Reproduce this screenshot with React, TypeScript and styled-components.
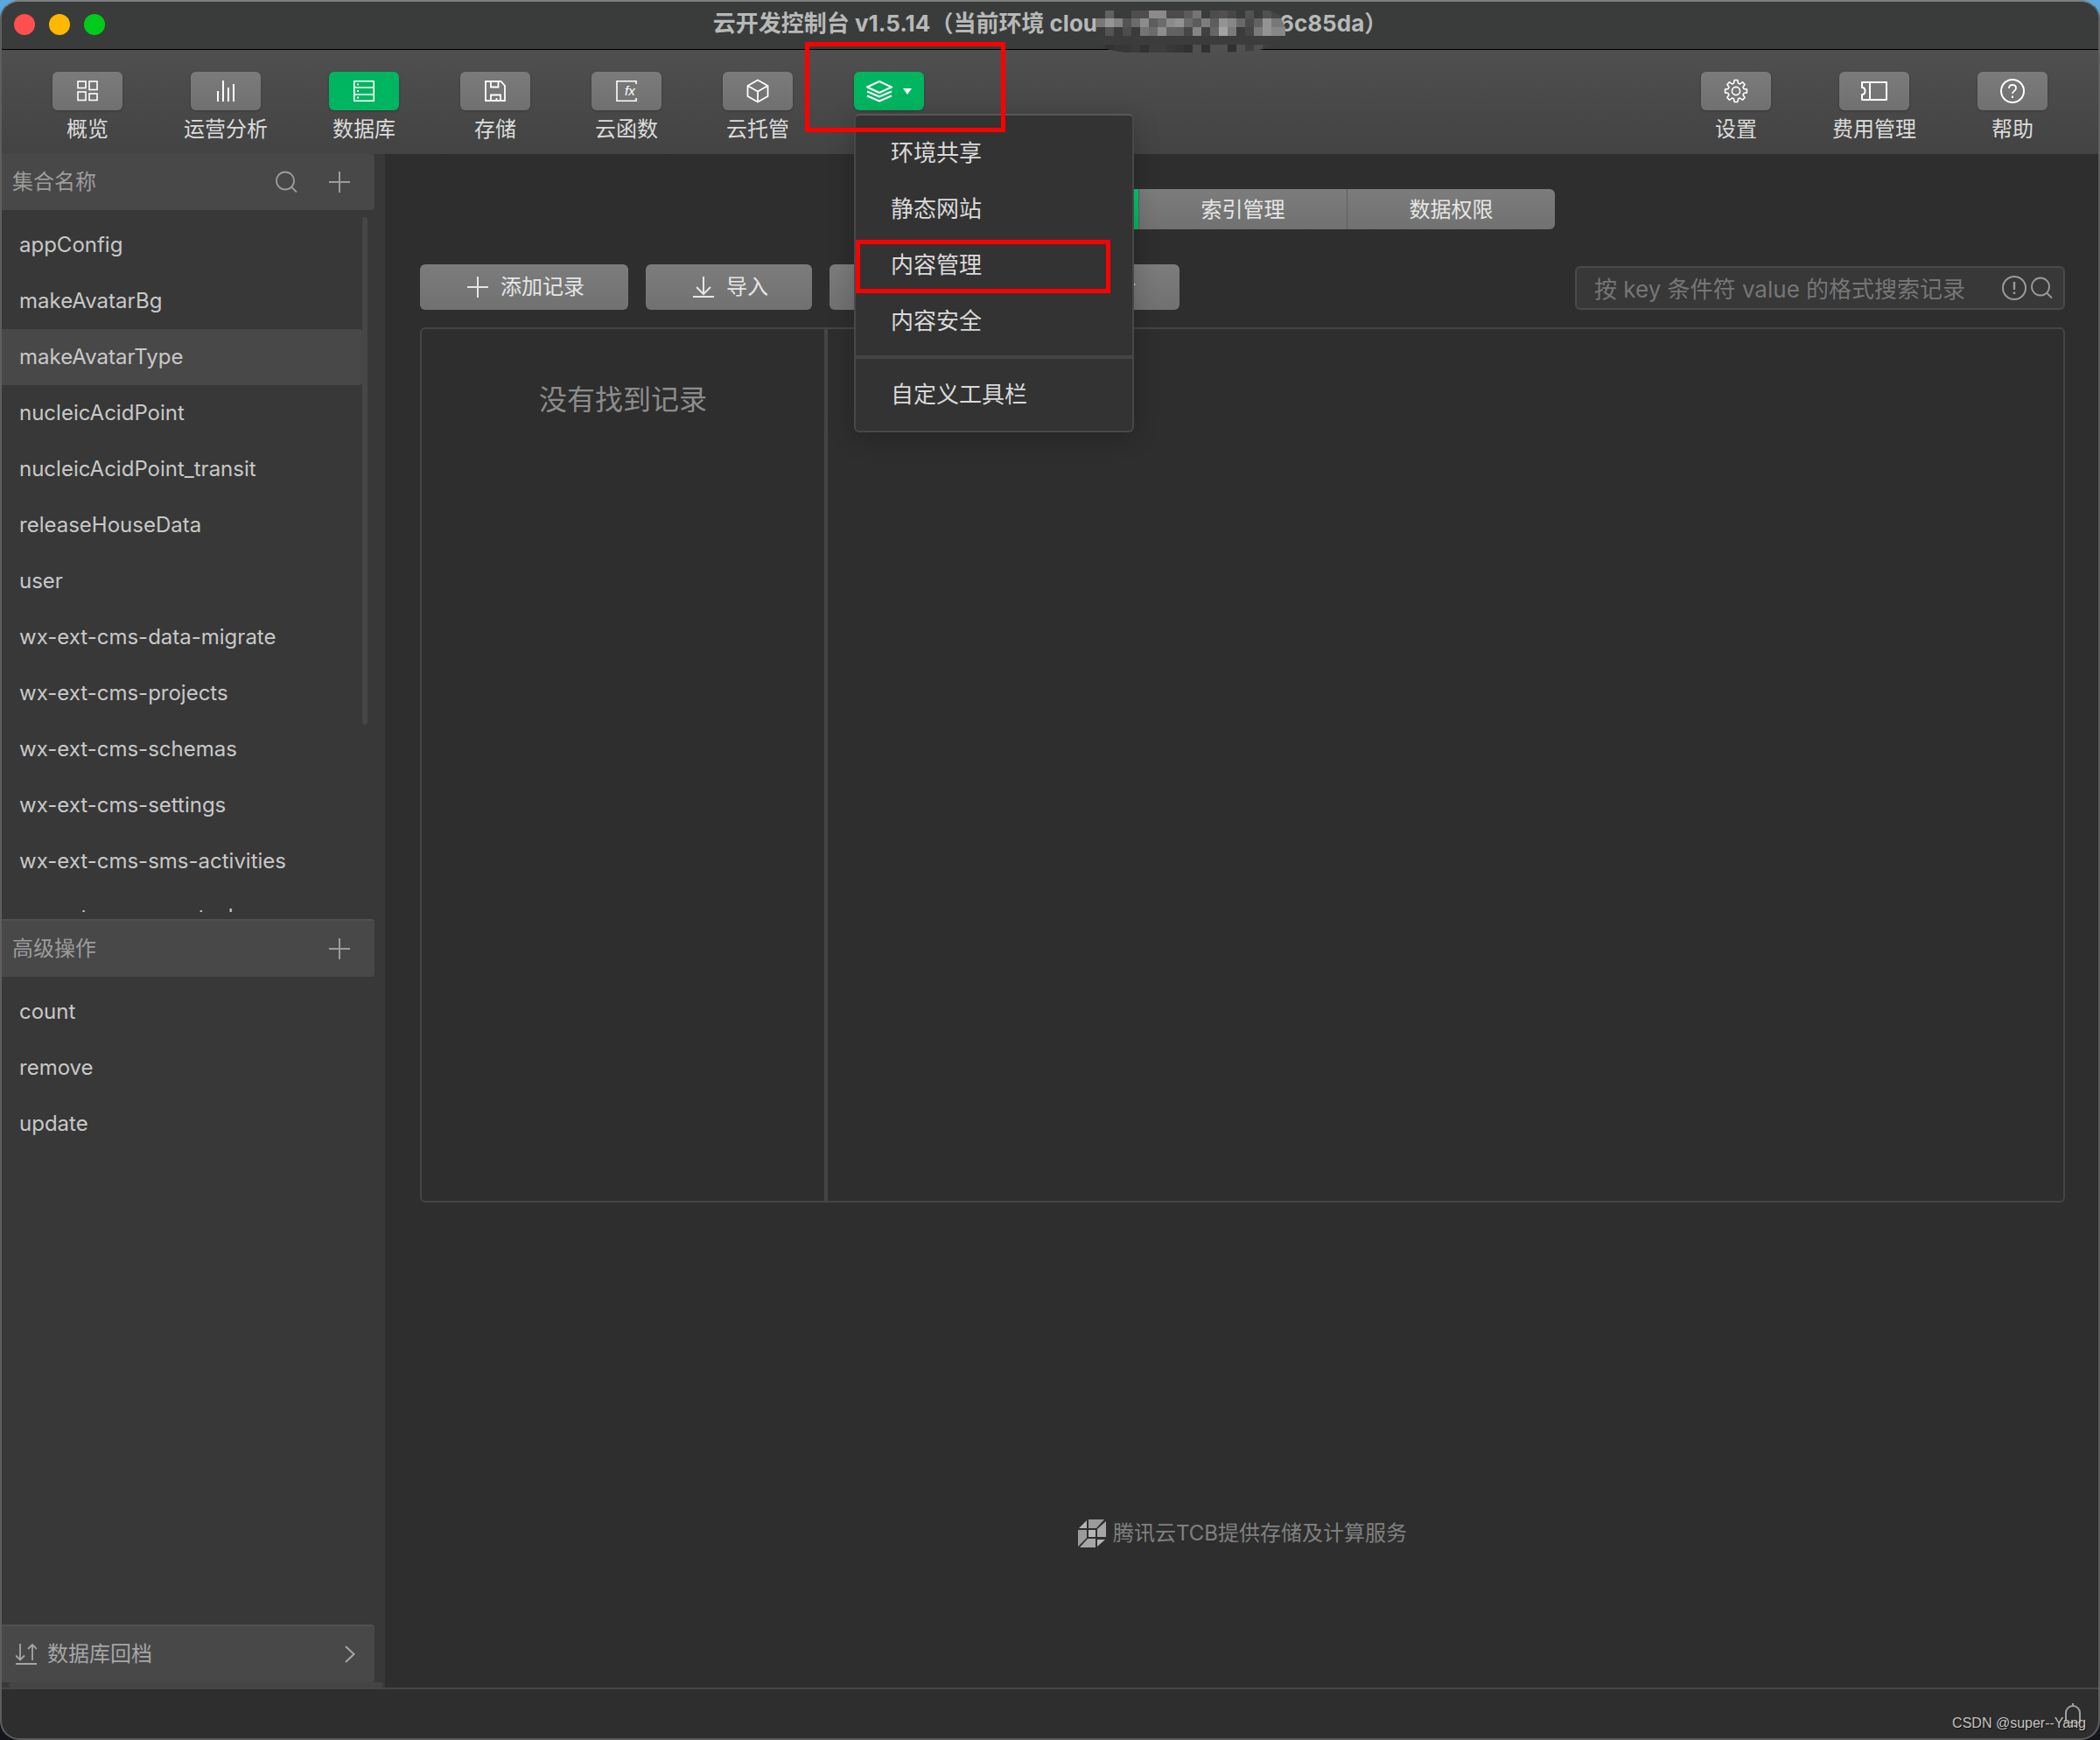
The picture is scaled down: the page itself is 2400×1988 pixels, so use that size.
import React from "react";
import styled, { createGlobalStyle, css } from "styled-components";

const GlobalStyle = createGlobalStyle`
  *, *::before, *::after { box-sizing: border-box; }
  html { background: linear-gradient(to bottom, #5aa9e0 0, #14161c 40%); }
  body {
    margin: 0;
    font-family: Inter, "Noto Sans CJK SC", sans-serif;
    font-size: 24px;
    line-height: 32px;
    color: #c8c8c8;
  }
  button, input { font: inherit; color: inherit; }
  button { border: 0; padding: 0; margin: 0; background: none; cursor: pointer; }
  ul { list-style: none; margin: 0; padding: 0; }
  svg { display: block; flex: none; }
`;

const Window = styled.div`
  display: flex;
  flex-direction: column;
  min-height: 100vh;
  border: 2px solid #5e5e5e;
  border-top-color: #7b7f7d;
  border-radius: 22px;
  background: #2e2e2e;
  overflow: hidden;
`;

/* ---------- title bar ---------- */

const TitleBar = styled.header`
  position: relative;
  display: flex;
  align-items: center;
  justify-content: center;
  height: 55px;
  padding-bottom: 4px;
  background: #3a3c3b;
  border-bottom: 1px solid #000;
`;

const Lights = styled.div`
  position: absolute;
  left: 14px;
  top: 14px;
  display: flex;
  gap: 16px;
`;

const Light = styled.button<{ $color: string }>`
  width: 24px;
  height: 24px;
  border-radius: 50%;
  background: ${(p) => p.$color};
`;

const Title = styled.h1`
  display: flex;
  align-items: center;
  margin: 0;
  font-size: 26px;
  font-weight: 700;
  line-height: 32px;
  color: #b7b9b8;
  white-space: pre;
`;

const Redacted = styled.span`
  position: relative;
  width: 208px;
  height: 32px;
`;

const MosaicArt = styled.svg`
  position: absolute;
  left: -4px;
  top: 1px;
  z-index: 1;
`;

/* ---------- toolbar ---------- */

const Toolbar = styled.nav`
  display: flex;
  justify-content: space-between;
  height: 119px;
  padding: 25px 58px 0;
  background: linear-gradient(to bottom, #4f4f4f, #434343);
`;

const ToolGroup = styled.div`
  display: flex;
  align-items: flex-start;
  gap: 70px;
`;

const Tool = styled.button`
  display: flex;
  flex-direction: column;
  align-items: center;
  gap: 6px;
  color: #dcdcdc;
`;

const Tile = styled.span<{ $active?: boolean }>`
  display: flex;
  align-items: center;
  justify-content: center;
  gap: 12px;
  width: 80px;
  height: 44px;
  border-radius: 6px;
  color: #fff;
  background: ${(p) => (p.$active ? "#00b560" : "linear-gradient(to bottom, #7b7b7b, #707070)")};
  box-shadow: 0 1px 3px rgba(0, 0, 0, 0.2);
`;

const MoreTool = styled.div`
  position: relative;
`;

const Menu = styled.div`
  position: absolute;
  left: 0;
  top: 48px;
  z-index: 5;
  width: 320px;
  border: 2px solid #484848;
  border-top-color: #585858;
  border-radius: 6px;
  background: #333;
  box-shadow: 0 6px 30px rgba(0, 0, 0, 0.2);
`;

const MenuGroup = styled.div<{ $last?: boolean }>`
  padding: ${(p) => (p.$last ? "9px 0" : "11px 0 7px")};
  ${(p) => p.$last && css`border-top: 4px solid #454545;`}
`;

const MenuItem = styled.button`
  position: relative;
  display: block;
  width: 100%;
  height: 64px;
  padding-left: 40px;
  text-align: left;
  font-size: 26px;
  color: #dadada;
`;

const MenuMark = styled.span`
  position: absolute;
  inset: 3px 25px 0 0;
  border: 5px solid #ff0000;
`;

const ToolMark = styled.span`
  position: absolute;
  left: -56px;
  top: -34px;
  z-index: 6;
  width: 229px;
  height: 103px;
  border: 5px solid #ff0000;
  pointer-events: none;
`;

/* ---------- body ---------- */

const Body = styled.div`
  display: flex;
  flex: 1;
`;

const Sidebar = styled.aside`
  display: flex;
  flex-direction: column;
  flex: none;
  width: 438px;
  background: #383838;
`;

const SectionHeader = styled.div<{ $divided?: boolean }>`
  display: flex;
  align-items: center;
  justify-content: space-between;
  margin-right: 12px;
  padding: 0 28px 0 12px;
  border-radius: 0 4px 4px 0;
  background: #484848;
  color: #9c9c9c;
  height: ${(p) => (p.$divided ? 66 : 64)}px;
  ${(p) => p.$divided && css`border-top: 2px solid #505050;`}
`;

const SectionTitle = styled.h2`
  margin: 0;
  font-size: 24px;
  font-weight: 400;
`;

const HeaderActions = styled.div`
  display: flex;
  align-items: center;
  gap: 36px;
`;

const CollectionArea = styled.div`
  display: flex;
  height: 794px;
  margin: 8px 20px 8px 0;
`;

const List = styled.ul`
  flex: 1;
  overflow: hidden;
`;

const OperationList = styled.ul`
  padding: 8px 26px 0 0;
`;

const ListItem = styled.button<{ $selected?: boolean }>`
  display: block;
  width: 100%;
  height: 64px;
  padding: 0 0 0 20px;
  border-radius: 0 4px 4px 0;
  text-align: left;
  color: #c8c8c8;
  background: ${(p) => (p.$selected ? "#484848" : "transparent")};
`;

const Track = styled.div`
  width: 6px;
`;

const Thumb = styled.div`
  height: 73%;
  border-radius: 3px;
  background: #464646;
`;

const SidebarFoot = styled.div`
  margin-top: auto;
`;

const Rollback = styled.button`
  display: flex;
  align-items: center;
  gap: 12px;
  width: 426px;
  height: 66px;
  padding: 0 22px 0 16px;
  border-top: 2px solid #505050;
  border-radius: 0 4px 4px 0;
  background: #484848;
  color: #a6a6a6;
`;

const RollbackLabel = styled.span`
  flex: 1;
  text-align: left;
`;

const HorizontalThumb = styled.div`
  height: 6px;
  margin: 0 2px 0 8px;
  border-radius: 3px;
  background: #444;
`;

const Main = styled.main`
  display: flex;
  flex-direction: column;
  flex: 1;
  padding: 40px 38px 0 40px;
`;

const raised = css`
  background: linear-gradient(to bottom, #7c7c7c, #717171);
  color: #e6e6e6;
`;

const Tabs = styled.div`
  display: flex;
  align-self: center;
  border-radius: 6px;
  overflow: hidden;
`;

const Tab = styled.button<{ $active?: boolean }>`
  width: 238px;
  height: 46px;
  padding-top: 2px;
  ${raised}
  ${(p) => p.$active && css`background: linear-gradient(to bottom, #00cb72, #00b560);`}
  & + & { border-left: 1px solid #5f5f5f; }
`;

const Actions = styled.div`
  display: flex;
  align-items: flex-end;
  gap: 20px;
  margin-top: 40px;
`;

const ActionButton = styled.button`
  display: flex;
  align-items: center;
  gap: 14px;
  height: 52px;
  padding: 0 50px 0 54px;
  border-radius: 6px;
  ${raised}
`;

const SearchBox = styled.label`
  display: flex;
  align-items: center;
  width: 560px;
  height: 50px;
  margin-left: auto;
  padding: 0 12px 0 20px;
  border: 2px solid #4a4a4a;
  border-radius: 6px;
  background: #383838;
  color: #9a9a9a;
  gap: 4px;
`;

const SearchInput = styled.input`
  flex: 1;
  min-width: 0;
  margin-right: 32px;
  padding: 4px 0 0;
  border: 0;
  outline: 0;
  background: transparent;
  font-size: 26px;
  &::placeholder { color: #767676; opacity: 1; }
`;

const Records = styled.section`
  display: flex;
  min-height: 1000px;
  margin-top: 20px;
  border: 2px solid #444;
  border-radius: 6px;
`;

const RecordList = styled.div`
  width: 464px;
  padding-top: 59px;
  border-right: 4px solid #444;
  text-align: center;
  font-size: 32px;
  line-height: 44px;
  color: #8c8c8c;
`;

const Brand = styled.footer`
  display: flex;
  align-items: center;
  justify-content: center;
  gap: 8px;
  margin: auto 0 160px;
  color: #808080;
`;

const StatusBar = styled.div`
  position: relative;
  display: flex;
  justify-content: flex-end;
  height: 58px;
  padding: 16px 19px 0 0;
  border-top: 2px solid #464646;
  color: #a0a0a0;
`;

const Watermark = styled.span`
  position: absolute;
  right: 14px;
  top: 23px;
  font-family: "Liberation Sans", Arial, sans-serif;
  font-size: 16px;
  color: #c4c4c4;
  text-shadow: 1px 1px 1px #111;
`;

/* ---------- icons ---------- */

type IconProps = { size?: number; width?: number; weight?: number; children: React.ReactNode };

const Icon = ({ size = 24, width = size, weight = 2, children }: IconProps) => (
  <svg width={width} height={size} viewBox={`0 0 ${width} ${size}`} fill="none" stroke="currentColor" strokeWidth={weight} aria-hidden="true">
    {children}
  </svg>
);

const OverviewIcon = () => (
  <Icon weight={1.6}>
    <rect x="1" y="1" width="9" height="7.5" />
    <rect x="14" y="1" width="9" height="9.5" />
    <rect x="1" y="13" width="9" height="9.5" />
    <rect x="14" y="15" width="9" height="7.5" />
  </Icon>
);
const ChartIcon = () => (
  <Icon><path d="M3 12v12M9 0v24M15 8v16M21 4v20" /></Icon>
);
const DatabaseIcon = () => (
  <Icon weight={1.6}>
    <path d="M.8.8h22.4v22.4H.8zM.8 8h22.4M.8 16h22.4" />
    <path d="M4 4.6h2M4 12h2M4 19.6h2" strokeWidth="2" />
  </Icon>
);
const SaveIcon = () => (
  <Icon weight={1.8}>
    <path d="M1 1h17.5L23 6v17H1zM7 1v6.5h8.500V1M7 23v-6.500h11V23M13.500 20v3" />
  </Icon>
);
const FunctionIcon = () => (
  <Icon weight={1.6}>
    <path d="M23 4V.8H1v22.400h22V20" />
    <text x="10" y="17" fontFamily="Liberation Sans" fontSize="15" fontStyle="italic" fill="currentColor" stroke="none">fx</text>
  </Icon>
);
const CubeIcon = () => (
  <Icon size={28} width={26} weight={1.8}>
    <path d="M13 1.500 24.500 8v12L13 26.500 1.500 20V8zM1.500 8 13 14.500 24.500 8M13 14.500v12" strokeLinejoin="round" />
  </Icon>
);
const LayersIcon = () => (
  <Icon size={26} width={30}>
    <path d="M15 2 29 8.500 15 15 1 8.500zM1 13.500l14 6 14-6M1 18.500l14 6 14-6" strokeLinejoin="round" />
  </Icon>
);
const CaretIcon = () => (
  <svg width="10" height="7" viewBox="0 0 10 7" aria-hidden="true"><path d="M0 0h10L5 7z" fill="currentColor" /></svg>
);

/* Eight-toothed outline, built from four points per tooth. */
const gearPath = (() => {
  const points: string[] = [];
  for (let i = 0; i < 8; i++) {
    const base = (i * Math.PI) / 4 - Math.PI / 2;
    [[-0.28, 9.2], [-0.15, 12.6], [0.15, 12.6], [0.28, 9.2]].forEach(([offset, radius]) => {
      points.push(`${(14 + radius * Math.cos(base + offset)).toFixed(2)} ${(14 + radius * Math.sin(base + offset)).toFixed(2)}`);
    });
  }
  return `M${points.join("L")}Z`;
})();
const SettingsIcon = () => (
  <Icon size={28} weight={1.6}>
    <path d={gearPath} strokeLinejoin="round" />
    <circle cx="14" cy="14" r="4.600" />
  </Icon>
);
const TicketIcon = () => (
  <Icon width={30} size={22}>
    <path d="M1 1h28v20H1v-6c2 0 3.500-1.500 3.500-4S3 7 1 7zM10 1v20" strokeLinejoin="round" />
  </Icon>
);
const HelpIcon = () => (
  <Icon size={28}>
    <circle cx="14" cy="14" r="13" />
    <path d="M10 11c0-2.500 1.700-4 4-4s4 1.500 4 3.700c0 3-4 3.300-4 6.300" strokeWidth="1.800" />
    <path d="M14 19.500v2.400" />
  </Icon>
);
const SearchIcon = () => (
  <Icon size={26} weight={1.8}>
    <circle cx="12" cy="11.500" r="10" />
    <path d="M19 18.500l6 6" />
  </Icon>
);
const PlusIcon = () => <Icon><path d="M12 0v24M0 12h24" /></Icon>;
const WarnIcon = () => (
  <Icon size={28}>
    <circle cx="14" cy="14" r="13" />
    <path d="M14 7v9M14 18.500v2.500" strokeWidth="2.400" />
  </Icon>
);
const ImportIcon = () => <Icon><path d="M12 0v19M4 12l8 8 8-8M0 23h24" /></Icon>;
const ExportIcon = () => <Icon><path d="M12 20V1M4 9l8-8 8 8M0 23h24" /></Icon>;
const RefreshIcon = () => <Icon><path d="M22 12a10 10 0 1 1-3-7M20 0v6h-6" /></Icon>;
const RollbackIcon = () => (
  <Icon><path d="M5 0v18M0 13.500l5 5 5-5M19 19V1M14 6l5-5 5 5M0 23h24" strokeWidth="1.800" /></Icon>
);
const ChevronIcon = () => <Icon size={20} width={12}><path d="M1 1l9.500 9L1 19" /></Icon>;
const BellIcon = () => (
  <Icon size={28} width={20}>
    <path d="M2 22V11a8 8 0 0 1 16 0v11M0 22h20M10 0v3M6 26h8" />
  </Icon>
);
const BrandIcon = () => (
  <svg width="32" height="32" viewBox="0 0 32 32" aria-hidden="true">
    <path fill="#b4b4b4" d="M1 10 10 1v9zM12 12h8v8h-8zM22 31v-8h9z" />
    <path fill="#9b9b9b" d="M12 0h18l-9 10h-9zM0 12h10v9L0 31z" />
    <path fill="#a6a6a6" d="M32 2v18H22V11zM11 22h9v10H2z" />
  </svg>
);

/* Pixelated patch over the private part of the environment id: one grey level per 10px cell, 0 leaves the bar visible. */
const mosaicRows: { y: number; height: number; cells: number[] }[] = [
  { y: 0, height: 9, cells: [0, 96, 0, 0, 77, 77, 138, 138, 74, 74, 90, 116, 0, 76, 80, 70, 0, 81, 0, 80, 70, 0] },
  { y: 9, height: 10, cells: [119, 148, 130, 83, 107, 139, 92, 106, 138, 146, 106, 90, 124, 92, 146, 134, 104, 74, 97, 146, 119, 119] },
  { y: 19, height: 10, cells: [0, 83, 0, 76, 0, 115, 106, 140, 97, 96, 70, 132, 64, 101, 162, 122, 0, 69, 120, 146, 134, 134] },
  { y: 29, height: 10, cells: Array(22).fill(59) },
  { y: 39, height: 9, cells: [58, 50, 54, 54, 58, 50, 60, 60, 55, 52, 48, 79, 48, 79, 79, 48, 79, 62, 79, 62, 58, 58] },
];

const Mosaic = () => (
  <MosaicArt width="219" height="49" viewBox="0 0 219 49" aria-hidden="true">
    <defs>
      <clipPath id="patch">
        <path d="M0 9 14 0h186l12 5 7 14v10h-4c-6 14-20 15-34 17l-50 3H44C24 47 8 44 5 37L0 29z" />
      </clipPath>
    </defs>
    <g clipPath="url(#patch)">
      {mosaicRows.map((row) =>
        row.cells.map((level, i) =>
          <rect
            key={`${row.y}-${i}`}
            x={3 + i * 10}
            y={row.y}
            width="10"
            height={row.height}
            fill={level ? `rgb(${level},${level + 1},${level})` : "#3a3c3b"}
          />
        )
      )}
    </g>
  </MosaicArt>
);

/* ---------- data ---------- */

const tools = [
  { label: "概览", icon: <OverviewIcon /> },
  { label: "运营分析", icon: <ChartIcon /> },
  { label: "数据库", icon: <DatabaseIcon />, active: true },
  { label: "存储", icon: <SaveIcon /> },
  { label: "云函数", icon: <FunctionIcon /> },
  { label: "云托管", icon: <CubeIcon /> },
];

const utilities = [
  { label: "设置", icon: <SettingsIcon /> },
  { label: "费用管理", icon: <TicketIcon /> },
  { label: "帮助", icon: <HelpIcon /> },
];

const menuItems = ["环境共享", "静态网站", "内容管理", "内容安全"];

const collections = [
  "appConfig",
  "makeAvatarBg",
  "makeAvatarType",
  "nucleicAcidPoint",
  "nucleicAcidPoint_transit",
  "releaseHouseData",
  "user",
  "wx-ext-cms-data-migrate",
  "wx-ext-cms-projects",
  "wx-ext-cms-schemas",
  "wx-ext-cms-settings",
  "wx-ext-cms-sms-activities",
  "wx-ext-cms-sms-tasks",
];

const operations = ["count", "remove", "update"];

const actions = [
  { label: "添加记录", icon: <PlusIcon /> },
  { label: "导入", icon: <ImportIcon /> },
  { label: "导出", icon: <ExportIcon /> },
  { label: "刷新", icon: <RefreshIcon /> },
];

const ToolButton = ({ label, icon, active }: { label: string; icon: React.ReactNode; active?: boolean }) => (
  <Tool type="button">
    <Tile $active={active}>{icon}</Tile>
    <span>{label}</span>
  </Tool>
);

export default function App() {
  return (
    <>
      <GlobalStyle />
      <Window>
        <TitleBar>
          <Lights>
            <Light type="button" $color="#ff5050" aria-label="关闭" />
            <Light type="button" $color="#ffb800" aria-label="最小化" />
            <Light type="button" $color="#00cb1c" aria-label="全屏" />
          </Lights>
          <Title>
            <span>云开发控制台 v1.5.14（当前环境 clou</span>
            <Redacted><Mosaic /></Redacted>
            <span>6c85da）</span>
          </Title>
        </TitleBar>

        <Toolbar>
          <ToolGroup>
            {tools.map((tool) => <ToolButton key={tool.label} {...tool} />)}
            <MoreTool>
              <Tool type="button" aria-label="更多" aria-expanded="true">
                <Tile $active><LayersIcon /><CaretIcon /></Tile>
              </Tool>
              <Menu role="menu">
                <MenuGroup>
                  {menuItems.map((item) => (
                    <MenuItem key={item} type="button" role="menuitem">
                      {item}
                      {item === "内容管理" && <MenuMark />}
                    </MenuItem>
                  ))}
                </MenuGroup>
                <MenuGroup $last>
                  <MenuItem type="button" role="menuitem">自定义工具栏</MenuItem>
                </MenuGroup>
              </Menu>
              <ToolMark />
            </MoreTool>
          </ToolGroup>
          <ToolGroup>
            {utilities.map((tool) => <ToolButton key={tool.label} {...tool} />)}
          </ToolGroup>
        </Toolbar>

        <Body>
          <Sidebar>
            <SectionHeader>
              <SectionTitle>集合名称</SectionTitle>
              <HeaderActions>
                <button type="button" aria-label="搜索集合"><SearchIcon /></button>
                <button type="button" aria-label="添加集合"><PlusIcon /></button>
              </HeaderActions>
            </SectionHeader>
            <CollectionArea>
              <List>
                {collections.map((name) => (
                  <li key={name}>
                    <ListItem type="button" $selected={name === "makeAvatarType"}>{name}</ListItem>
                  </li>
                ))}
              </List>
              <Track><Thumb /></Track>
            </CollectionArea>
            <SectionHeader $divided>
              <SectionTitle>高级操作</SectionTitle>
              <HeaderActions>
                <button type="button" aria-label="添加操作"><PlusIcon /></button>
              </HeaderActions>
            </SectionHeader>
            <OperationList>
              {operations.map((name) => (
                <li key={name}><ListItem type="button">{name}</ListItem></li>
              ))}
            </OperationList>
            <SidebarFoot>
              <Rollback type="button">
                <RollbackIcon />
                <RollbackLabel>数据库回档</RollbackLabel>
                <ChevronIcon />
              </Rollback>
              <HorizontalThumb />
            </SidebarFoot>
          </Sidebar>

          <Main>
            <Tabs>
              <Tab type="button" $active>记录列表</Tab>
              <Tab type="button">索引管理</Tab>
              <Tab type="button">数据权限</Tab>
            </Tabs>
            <Actions>
              {actions.map((action) => (
                <ActionButton key={action.label} type="button">
                  {action.icon}
                  {action.label}
                </ActionButton>
              ))}
              <SearchBox>
                <SearchInput type="text" aria-label="搜索记录" placeholder="按 key 条件符 value 的格式搜索记录" />
                <WarnIcon />
                <SearchIcon />
              </SearchBox>
            </Actions>
            <Records>
              <RecordList>没有找到记录</RecordList>
            </Records>
            <Brand>
              <BrandIcon />
              <span>腾讯云TCB提供存储及计算服务</span>
            </Brand>
          </Main>
        </Body>

        <StatusBar>
          <BellIcon />
          <Watermark>CSDN @super--Yang</Watermark>
        </StatusBar>
      </Window>
    </>
  );
}
